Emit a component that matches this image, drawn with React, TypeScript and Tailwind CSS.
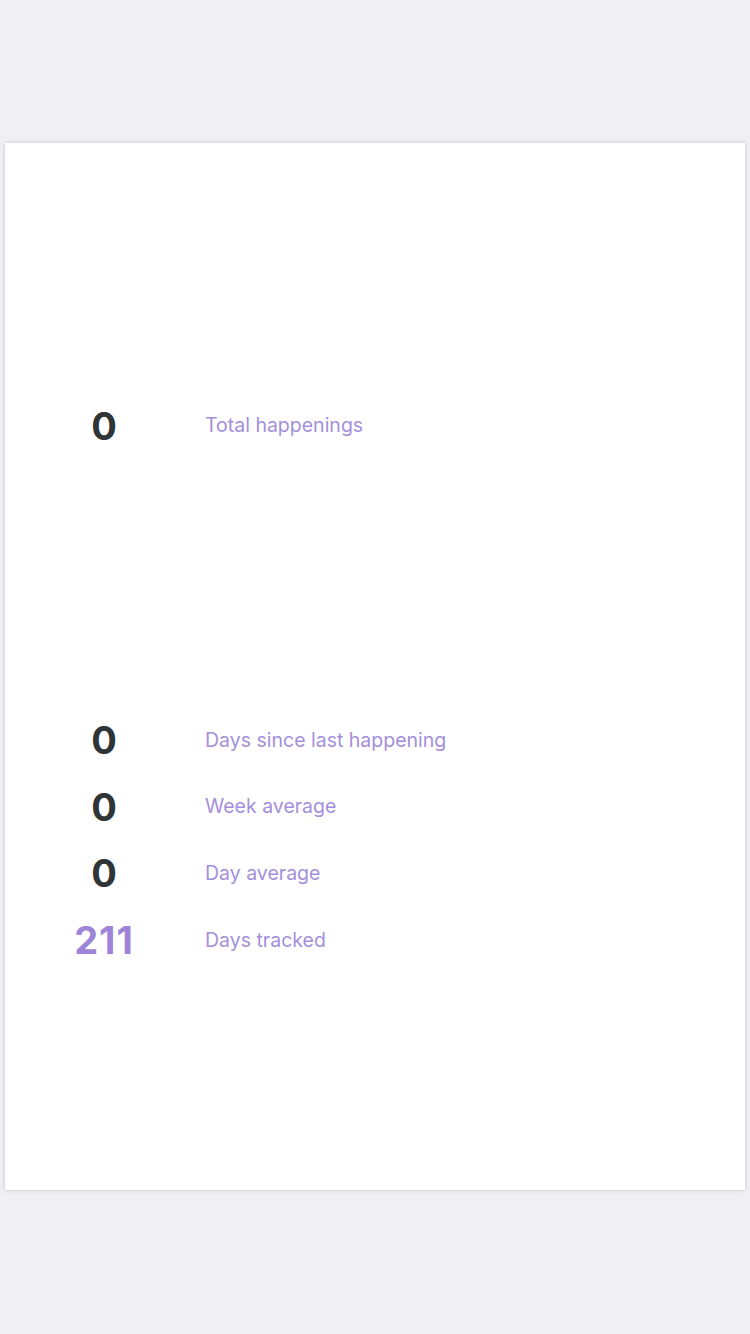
export default function App() {
  const rows = [
    { n: "0", label: "Days since last happening", accent: false },
    { n: "0", label: "Week average", accent: false },
    { n: "0", label: "Day average", accent: false },
    { n: "211", label: "Days tracked", accent: true },
  ];
  return (
    <div
      className="w-[750px] h-[1334px] bg-[#efeff4] pt-[143px] overflow-hidden"
      style={{ fontFamily: "Inter, 'Noto Sans', sans-serif" }}
    >
      <div className="mx-[5px] h-[1047px] bg-white shadow-[0_0_4px_rgba(0,0,0,0.18)] flex flex-col">
        <div className="mt-[258px] flex items-center h-[50px]">
          <div className="w-[198px] text-center text-[38px] font-bold text-[#2f3437]">0</div>
          <div className="ml-[2px] text-[19.5px] text-[#a48fdc]">Total happenings</div>
        </div>
        <div className="mt-[256px] flex flex-col">
          {rows.map((r, i) => (
            <div key={i} className="flex items-center h-[66.7px]">
              <div
                className={
                  r.accent
                    ? "w-[198px] text-center text-[38px] font-bold tracking-[1px] text-[#9d84d9]"
                    : "w-[198px] text-center text-[38px] font-bold text-[#2f3437]"
                }
              >
                {r.n}
              </div>
              <div className="ml-[2px] text-[19.5px] text-[#a48fdc]">{r.label}</div>
            </div>
          ))}
        </div>
      </div>
    </div>
  );
}
